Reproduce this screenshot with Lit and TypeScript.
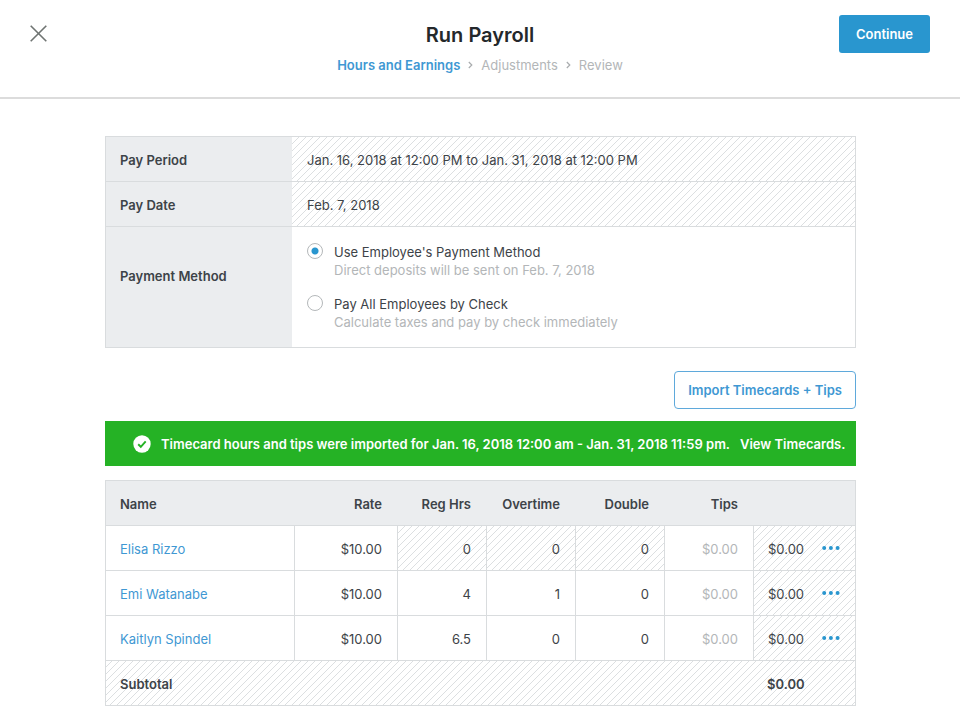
import { LitElement, html, css, svg } from "lit";
import { customElement, property, state } from "lit/decorators.js";

interface Employee {
  name: string;
  rate: string;
  hours: [string, string, string];
  salaried: boolean;
  total: string;
}

const HOUR_COLUMNS = ["Reg Hrs", "Overtime", "Double"];

const EMPLOYEES: Employee[] = [
  { name: "Elisa Rizzo", rate: "$10.00", hours: ["0", "0", "0"], salaried: true, total: "$0.00" },
  { name: "Emi Watanabe", rate: "$10.00", hours: ["4", "1", "0"], salaried: false, total: "$0.00" },
  { name: "Kaitlyn Spindel", rate: "$10.00", hours: ["6.5", "0", "0"], salaried: false, total: "$0.00" },
];

const METHODS = [
  {
    id: "employee",
    title: "Use Employee's Payment Method",
    note: "Direct deposits will be sent on Feb. 7, 2018",
  },
  {
    id: "check",
    title: "Pay All Employees by Check",
    note: "Calculate taxes and pay by check immediately",
  },
];

const base = css`
  :host {
    --ink: #3d4348;
    --muted: #b3b6b8;
    --blue: #2996cf;
    --link: #3f98d3;
    --line: #d9dcde;
    --fill: #ebedef;
    --stripe: #dcdfe1;
    display: block;
    font: 13px/18px Inter, "Liberation Sans", sans-serif;
    color: var(--ink);
  }
  * {
    box-sizing: border-box;
  }
  button,
  input {
    font: inherit;
    color: inherit;
    margin: 0;
  }
  button {
    cursor: pointer;
  }
  a {
    color: var(--link);
    text-decoration: none;
  }
  table {
    width: 100%;
    table-layout: fixed;
    border-collapse: separate;
    border-spacing: 0;
    border-top: 1px solid var(--line);
    border-right: 1px solid var(--line);
  }
  th {
    font-weight: 600;
    text-align: left;
    background: var(--fill);
  }
  th,
  td {
    height: 45px;
    padding: 2px 15px 0 14px;
    border-bottom: 1px solid var(--line);
  }
  /* One tile repeats seamlessly: a stripe on its diagonal and the same stripe cut by two corners. */
  .hatched {
    background: linear-gradient(
        135deg,
        var(--stripe) 0 6%,
        transparent 7% 43%,
        var(--stripe) 44% 56%,
        transparent 57% 93%,
        var(--stripe) 94%
      )
      0 0 / 7px 7px;
  }
`;

@customElement("payroll-header")
export class PayrollHeader extends LitElement {
  static styles = [
    base,
    css`
      header {
        display: grid;
        grid-template-columns: 1fr auto 1fr;
        align-items: start;
        height: 99px;
        padding: 15px 30px 0;
        border-bottom: 2px solid #dcdcdc;
      }
      .close {
        display: flex;
        width: 17px;
        margin-top: 10px;
        padding: 0;
        border: 0;
        background: none;
      }
      .middle {
        padding-top: 6px;
        text-align: center;
      }
      h1 {
        margin: 0 0 7px;
        font-size: 20px;
        line-height: 28px;
        font-weight: 600;
        color: #24282b;
      }
      ol {
        display: flex;
        gap: 8px;
        margin: 0;
        padding: 0;
        list-style: none;
        color: var(--muted);
      }
      li {
        display: flex;
        align-items: center;
        gap: 8px;
      }
      .current {
        font-weight: 600;
      }
      .continue {
        justify-self: end;
        height: 38px;
        padding: 0 17px;
        border: 0;
        border-radius: 3px;
        background: var(--blue);
        color: #fff;
        font-weight: 600;
      }
    `,
  ];

  private chevron = svg`<svg width="5" height="8" viewBox="0 0 5 8" fill="none" stroke="#a9acae" stroke-width="1.2" aria-hidden="true"><path d="M.8 1l3 3-3 3" /></svg>`;

  render() {
    return html`
      <header>
        <button class="close" aria-label="Close">
          <svg width="17" height="17" viewBox="0 0 17 17" fill="none" stroke="#6f7472" stroke-width="1.6">
            <path d="M.7.7l15.6 15.6M16.3.7L.7 16.3" />
          </svg>
        </button>
        <div class="middle">
          <h1>Run Payroll</h1>
          <ol>
            <li><a class="current" href="#hours" aria-current="step">Hours and Earnings</a></li>
            <li>${this.chevron}<span>Adjustments</span></li>
            <li>${this.chevron}<span>Review</span></li>
          </ol>
        </div>
        <button class="continue">Continue</button>
      </header>
    `;
  }
}

@customElement("pay-settings")
export class PaySettings extends LitElement {
  @state() private method = "employee";

  static styles = [
    base,
    css`
      th {
        width: 187px;
        border-left: 1px solid var(--line);
      }
      td {
        padding-left: 15px;
      }
      .methods {
        padding: 16px 15px;
      }
      .tall {
        padding-bottom: 24px;
      }
      .options {
        display: grid;
        gap: 16px;
      }
      label {
        display: grid;
        grid-template-columns: 16px 1fr;
        column-gap: 11px;
      }
      input {
        appearance: none;
        width: 16px;
        height: 16px;
        border: 1px solid #b4b8ba;
        border-radius: 50%;
        background: #fff;
      }
      input:checked {
        background: radial-gradient(circle, var(--blue) 0 3px, #fff 4px);
      }
      .note {
        grid-column: 2;
        color: var(--muted);
      }
    `,
  ];

  render() {
    return html`
      <table>
        <tr>
          <th scope="row">Pay Period</th>
          <td class="hatched">Jan. 16, 2018 at 12:00 PM to Jan. 31, 2018 at 12:00 PM</td>
        </tr>
        <tr>
          <th scope="row">Pay Date</th>
          <td class="hatched">Feb. 7, 2018</td>
        </tr>
        <tr>
          <th class="tall" scope="row">Payment Method</th>
          <td class="methods">
            <div class="options">
              ${METHODS.map(
                (m) => html`
                  <label>
                    <input
                      type="radio"
                      name="method"
                      .checked=${this.method === m.id}
                      @change=${() => (this.method = m.id)}
                    />
                    <span>${m.title}</span>
                    <span class="note">${m.note}</span>
                  </label>
                `,
              )}
            </div>
          </td>
        </tr>
      </table>
    `;
  }
}

@customElement("hours-table")
export class HoursTable extends LitElement {
  @property({ attribute: false }) employees: Employee[] = [];

  static styles = [
    base,
    css`
      th,
      td {
        text-align: right;
      }
      th:first-child,
      td:first-child {
        text-align: left;
        border-left: 1px solid var(--line);
      }
      tbody td {
        border-left: 1px solid var(--line);
      }
      .rate {
        width: 103px;
      }
      .amount {
        width: 89px;
      }
      .total {
        width: 102px;
      }
      tbody .entry {
        padding: 0;
      }
      input {
        display: block;
        width: 100%;
        height: 44px;
        padding: 2px 15px 0 14px;
        border: 0;
        background: none;
        text-align: right;
      }
      input::placeholder {
        color: var(--muted);
        opacity: 1;
      }
      .sum {
        display: flex;
        align-items: center;
        justify-content: space-between;
      }
      .more {
        display: flex;
        padding: 0;
        border: 0;
        background: none;
      }
      tfoot td {
        font-weight: 600;
        text-align: left;
      }
    `,
  ];

  private hourCell(e: Employee, i: number) {
    return e.salaried
      ? html`<td class="hatched">${e.hours[i]}</td>`
      : html`<td class="entry">
          <input aria-label="${e.name} ${HOUR_COLUMNS[i]}" .value=${e.hours[i]} />
        </td>`;
  }

  render() {
    return html`
      <table>
        <thead>
          <tr>
            <th scope="col">Name</th>
            <th class="rate" scope="col">Rate</th>
            ${HOUR_COLUMNS.map((c) => html`<th class="amount" scope="col">${c}</th>`)}
            <th class="amount" scope="col">Tips</th>
            <th class="total" scope="col"></th>
          </tr>
        </thead>
        <tbody>
          ${this.employees.map(
            (e) => html`
              <tr>
                <td><a href="#employee">${e.name}</a></td>
                <td>${e.rate}</td>
                ${HOUR_COLUMNS.map((_, i) => this.hourCell(e, i))}
                <td class="entry"><input aria-label="${e.name} Tips" placeholder="$0.00" /></td>
                <td class="hatched">
                  <div class="sum">
                    <span>${e.total}</span>
                    <button class="more" aria-label="More actions for ${e.name}">
                      <svg width="18" height="6" viewBox="0 0 18 6" fill="#2996cf">
                        <circle cx="2.2" cy="2" r="2" />
                        <circle cx="8.9" cy="2" r="2" />
                        <circle cx="15.6" cy="2" r="2" />
                      </svg>
                    </button>
                  </div>
                </td>
              </tr>
            `,
          )}
        </tbody>
        <tfoot class="hatched">
          <tr>
            <td colspan="6">Subtotal</td>
            <td>$0.00</td>
          </tr>
        </tfoot>
      </table>
    `;
  }
}

@customElement("app-root")
export class AppRoot extends LitElement {
  static styles = [
    base,
    css`
      :host {
        min-height: 100vh;
        background: #fff;
      }
      main {
        display: flex;
        flex-direction: column;
        padding: 37px 104px 15px 105px;
      }
      .import {
        align-self: flex-end;
        height: 38px;
        margin: 23px 0 12px;
        padding: 0 13px;
        border: 1px solid #5fa9db;
        border-radius: 4px;
        background: #fff;
        color: var(--link);
        font-weight: 600;
      }
      .banner {
        display: flex;
        align-items: center;
        gap: 10px;
        min-height: 45px;
        margin-bottom: 14px;
        padding: 0 4px 0 28px;
        background: #25b225;
        color: #fff;
        font-weight: 600;
      }
      .banner svg {
        flex: none;
      }
      .banner a {
        color: inherit;
        white-space: nowrap;
      }
    `,
  ];

  render() {
    return html`
      <payroll-header></payroll-header>
      <main>
        <pay-settings></pay-settings>
        <button class="import">Import Timecards + Tips</button>
        <div class="banner" role="status">
          <svg width="18" height="18" viewBox="0 0 18 18" aria-hidden="true">
            <circle cx="9" cy="9" r="8.7" fill="#fff" />
            <path d="M5.2 9.3l2.6 2.5 4.9-5.4" fill="none" stroke="#25b225" stroke-width="1.9" />
          </svg>
          <span>Timecard hours and tips were imported for Jan. 16, 2018 12:00 am - Jan. 31, 2018 11:59 pm.</span>
          <a href="#timecards">View Timecards.</a>
        </div>
        <hours-table .employees=${EMPLOYEES}></hours-table>
      </main>
    `;
  }
}
